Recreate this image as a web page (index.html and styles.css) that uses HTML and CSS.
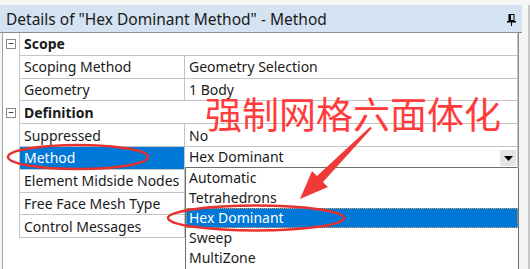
FILE: index.html
```html
<!DOCTYPE html>
<html lang="en">
<head>
    <meta charset="UTF-8">
    <title>Details of "Hex Dominant Method" - Method</title>
    <link rel="stylesheet" href="styles.css">
</head>
<body>
    <div class="window">
        <div class="panel">
            <!-- Title bar -->
            <div class="titlebar">
                <span class="title">Details of "Hex Dominant Method" - Method</span>
                <svg class="pin" width="9" height="12" viewBox="0 0 9 12">
                    <rect x="2" y="0.5" width="5" height="6" fill="none" stroke="#000" stroke-width="1"/>
                    <rect x="2" y="0" width="2" height="7" fill="#000"/>
                    <rect x="0" y="7" width="9" height="1.5" fill="#000"/>
                    <rect x="4" y="8" width="1" height="4" fill="#000"/>
                </svg>
            </div>

            <!-- Property grid -->
            <div class="sheet">
                <div class="grid">
                    <div class="gutter"><span class="toggle">−</span></div>
                    <div class="cell head">Scope</div>

                    <div class="gutter"></div>
                    <div class="cell name">Scoping Method</div>
                    <div class="cell value">Geometry Selection</div>

                    <div class="gutter"></div>
                    <div class="cell name">Geometry</div>
                    <div class="cell value">1 Body</div>

                    <div class="gutter"><span class="toggle">−</span></div>
                    <div class="cell head">Definition</div>

                    <div class="gutter"></div>
                    <div class="cell name">Suppressed</div>
                    <div class="cell value">No</div>

                    <div class="gutter"></div>
                    <div class="cell name selected">Method</div>
                    <div class="cell value combo-cell">
                        <div class="combo">
                            <span>Hex Dominant</span>
                            <span class="combo-btn">
                                <svg width="9" height="5" viewBox="0 0 9 5"><path d="M0 0 H9 L4.5 5 Z" fill="#000"/></svg>
                            </span>
                        </div>
                    </div>

                    <div class="gutter"></div>
                    <div class="cell name">Element Midside Nodes</div>
                    <div class="cell value"></div>

                    <div class="gutter"></div>
                    <div class="cell name">Free Face Mesh Type</div>
                    <div class="cell value"></div>

                    <div class="gutter"></div>
                    <div class="cell name">Control Messages</div>
                    <div class="cell value"></div>
                </div>

                <!-- Open dropdown list -->
                <ul class="dropdown">
                    <li>Automatic</li>
                    <li>Tetrahedrons</li>
                    <li class="active">Hex Dominant</li>
                    <li>Sweep</li>
                    <li>MultiZone</li>
                </ul>
            </div>
        </div>
        <div class="side"></div>
    </div>

    <!-- Red annotations drawn over the screenshot -->
    <div class="note">强制网格六面体化</div>
    <svg class="marks" width="530" height="269" viewBox="0 0 530 269">
        <ellipse cx="78" cy="157" rx="70" ry="12" fill="none" stroke="#e8302e" stroke-width="2.5"/>
        <ellipse cx="256" cy="218" rx="88" ry="12.5" fill="none" stroke="#e8302e" stroke-width="2.5"/>
        <polygon points="372,128 323,182 328,187 300,199 312,171 317,176 370,127" fill="#f03a38"/>
    </svg>
</body>
</html>
```

FILE: styles.css
```css
/* Base */
* {
    margin: 0;
    padding: 0;
    box-sizing: border-box;
}

body {
    width: 530px;
    height: 269px;
    overflow: hidden;
    background: #f5f5f5;
    font-family: "Noto Sans", "Open Sans", sans-serif;
    color: #1a1a1a;
    position: relative;
}

.window {
    display: flex;
    height: 100%;
    padding-top: 5px;
}

.panel {
    width: 522px;
    display: flex;
    flex-direction: column;
}

/* Title bar */
.titlebar {
    height: 28px;
    background: #d4e2f1;
    border-bottom: 1px solid #8e8e8e;
    display: flex;
    align-items: center;
    justify-content: space-between;
    padding: 0 6px 0 6px;
    font-size: 15.5px;
}

.pin {
    margin-top: 2px;
}

/* Property grid */
.sheet {
    flex: 1;
    position: relative;
    margin-left: 2px;
    margin-right: 3px;
    background: #fff;
    border-left: 1px solid #a0a0a0;
    border-right: 1px solid #8a8a8a;
}

.grid {
    display: grid;
    grid-template-columns: 16px 166px 333px;
    grid-auto-rows: 22.8px;
    font-size: 14px;
}

.gutter {
    display: flex;
    align-items: center;
    justify-content: center;
}

.toggle {
    width: 10px;
    height: 10px;
    border: 1px solid #8a8a8a;
    font-size: 10px;
    line-height: 7px;
    text-align: center;
    color: #000;
}

.cell {
    border-bottom: 1px solid #c4c4c4;
    border-right: 1px solid #c4c4c4;
    padding-left: 4px;
    display: flex;
    align-items: center;
    white-space: nowrap;
}

.name {
    border-left: 1px solid #c4c4c4;
}

.head {
    grid-column: 2 / 4;
    border-left: 1px solid #c4c4c4;
    font-weight: bold;
}

.selected {
    background: #0078d7;
    color: #fff;
}

.combo-cell {
    padding: 0;
    align-items: stretch;
}

.combo {
    flex: 1;
    display: flex;
    align-items: center;
    justify-content: space-between;
    padding-left: 4px;
    padding-right: 1px;
    border-bottom: 1px solid #6e6e6e;
    margin-bottom: 1px;
}

.combo-btn {
    width: 16px;
    height: 16px;
    margin-top: 3px;
    background: #e4e4e4;
    display: flex;
    align-items: center;
    justify-content: center;
}

/* Dropdown list */
.dropdown {
    position: absolute;
    left: 182px;
    top: 135px;
    width: 334px;
    bottom: -2px;
    list-style: none;
    background: #fff;
    border-left: 1px solid #6e6e6e;
    border-right: 1px solid #6e6e6e;
    font-size: 14px;
}

.dropdown li {
    height: 20px;
    line-height: 20px;
    padding-left: 3px;
}

.dropdown li.active {
    background: #0078d7;
    color: #fff;
    outline: 1px dotted #e0a060;
    outline-offset: -1px;
}

/* Right edge strip */
.side {
    flex: 1;
    border-right: 2px solid #c8c8c8;
}

/* Annotations */
.note {
    position: absolute;
    left: 205px;
    top: 99px;
    font-family: "Noto Sans CJK SC", sans-serif;
    font-size: 37px;
    line-height: 0.8;
    color: #ff3b3b;
}

.marks {
    position: absolute;
    left: 0;
    top: 0;
}
```
